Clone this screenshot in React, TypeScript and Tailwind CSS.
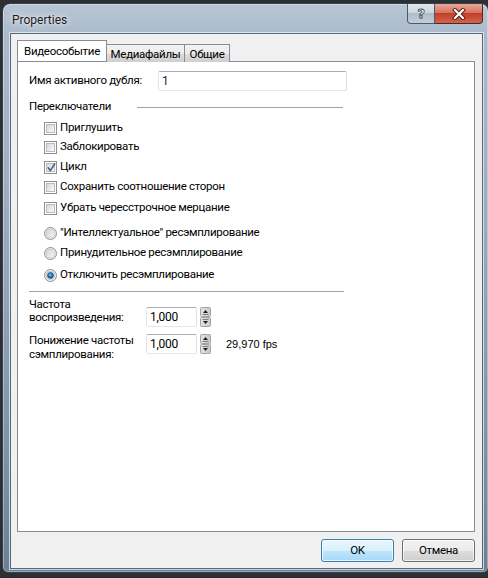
import React from 'react';

function CheckBox({ checked }: { checked?: boolean }) {
  return (
    <div className="relative w-[13px] h-[13px] border border-[#8e8f8f] bg-white p-[1px] shrink-0">
      <div className="w-full h-full border border-[#b9bdc2] bg-[linear-gradient(135deg,#d5d8dc_0%,#e9ebed_55%,#f9f9f9_100%)]" />
      {checked && (
        <svg className="absolute left-[1px] top-[0px]" width="11" height="11" viewBox="0 0 11 11">
          <path d="M2.2 5.8 L4.3 8.6 L8.8 1.8" fill="none" stroke="#4a5f8c" strokeWidth="1.6" strokeLinecap="round" strokeLinejoin="round" />
        </svg>
      )}
    </div>
  );
}

function Radio({ checked }: { checked?: boolean }) {
  return (
    <svg width="13" height="13" viewBox="0 0 13 13" className="shrink-0">
      <defs>
        <linearGradient id="rbg" x1="0" y1="0" x2="1" y2="1">
          <stop offset="0" stopColor="#cfd3d8" />
          <stop offset="1" stopColor="#f7f7f7" />
        </linearGradient>
        <radialGradient id="rdot" cx="0.45" cy="0.4" r="0.6">
          <stop offset="0" stopColor="#8fd0f4" />
          <stop offset="0.45" stopColor="#2a7fc6" />
          <stop offset="1" stopColor="#1a4f8a" />
        </radialGradient>
      </defs>
      <circle cx="6.5" cy="6.5" r="6" fill="#fff" stroke="#8e8f8f" />
      <circle cx="6.5" cy="6.5" r="4.6" fill="url(#rbg)" stroke="#b3b7bc" strokeWidth="0.8" />
      {checked && <circle cx="6.5" cy="6.5" r="3" fill="url(#rdot)" stroke="#174b80" strokeWidth="0.6" />}
    </svg>
  );
}

function Spinner() {
  return (
    <svg width="11" height="20" viewBox="0 0 11 20" className="shrink-0">
      <defs>
        <linearGradient id="sp" x1="0" y1="0" x2="1" y2="0">
          <stop offset="0" stopColor="#e4e4e4" />
          <stop offset="1" stopColor="#c9c9c9" />
        </linearGradient>
      </defs>
      <rect x="0.5" y="0.5" width="10" height="9" rx="1" fill="url(#sp)" stroke="#a3a3a3" />
      <rect x="0.5" y="10.5" width="10" height="9" rx="1" fill="url(#sp)" stroke="#a3a3a3" />
      <path d="M3 6 L5.5 3 L8 6 Z" fill="#1e1e1e" />
      <path d="M3 14 L8 14 L5.5 17 Z" fill="#1e1e1e" />
      <line x1="2.5" y1="7.5" x2="8.5" y2="7.5" stroke="#7c7c7c" />
      <line x1="2.5" y1="12.5" x2="8.5" y2="12.5" stroke="#7c7c7c" />
    </svg>
  );
}

function SpinField({ value }: { value: string }) {
  return (
    <div className="flex items-start">
      <div className="w-[51px] h-[20px] border border-[#abadb3] border-l-[#e2e3ea] border-r-[#dbdfe6] border-b-[#e3e9ef] rounded-[2px] bg-white pl-[3px] leading-[18px] text-[12px]">
        {value}
      </div>
      <div className="ml-[3px]">
        <Spinner />
      </div>
    </div>
  );
}

function Row({ children, className }: { children: React.ReactNode; className: string }) {
  return <div className={`flex items-center h-[16px] pl-[15px] gap-[3px] ${className}`}>{children}</div>;
}

export default function App() {
  return (
    <div className="w-[488px] h-[578px] overflow-hidden bg-[#2d3033] pt-[3px] pl-[2px] font-['Segoe_UI',Roboto,sans-serif] text-[11.5px] tracking-[-0.3px] text-black">
      <div className="w-[487px] h-[570px] flex flex-col rounded-t-[8px] rounded-b-[6px] border border-[#34404d] bg-[linear-gradient(180deg,#b7c5d3_0%,#aabacb_6%,#95a8bb_45%,#7a8ea3_85%,#6a7e94_100%)] shadow-[inset_0_0_0_1px_rgba(255,255,255,0.35)]">
        {/* title bar */}
        <div className="h-[29px] flex justify-between">
          <div className="pl-[9px] pt-[7px] text-[12px] tracking-normal text-[#1b1b1b] [text-shadow:0_0_8px_rgba(255,255,255,0.95),0_0_3px_rgba(255,255,255,0.8)]">
            Properties
          </div>
          <div className="flex mr-[5px] h-[20px]">
            <div className="w-[28px] h-[20px] rounded-bl-[4px] border border-t-0 border-[#4b5a6a] bg-[linear-gradient(180deg,#e2e8ee_0%,#cdd6e0_45%,#aebbc9_50%,#c3ced9_100%)] flex items-center justify-center">
              <span className="font-['DejaVu_Sans',sans-serif] font-bold text-[13px] leading-none text-white [-webkit-text-stroke:0.8px_#3a4654]">?</span>
            </div>
            <div className="w-[48px] h-[20px] rounded-br-[4px] border border-l-0 border-t-0 border-[#4b2a25] bg-[linear-gradient(180deg,#e8a899_0%,#d7735f_45%,#c23f27_50%,#d2644c_100%)] flex items-center justify-center">
              <svg width="14" height="12" viewBox="0 0 14 12">
                <path d="M3 2 L11 10 M11 2 L3 10" stroke="#4a1d16" strokeWidth="4" strokeLinecap="square" />
                <path d="M3 2 L11 10 M11 2 L3 10" stroke="#ffffff" strokeWidth="2.2" strokeLinecap="square" />
              </svg>
            </div>
          </div>
        </div>

        {/* client area */}
        <div className="ml-[7px] w-[473px] h-[536px] border border-[#56677a] bg-[#f0f0f0] shadow-[0_0_0_1px_rgba(235,241,247,0.75)] flex flex-col pt-[7px] pl-[6px] pr-[7px]">
          {/* tabs */}
          <div className="flex items-end h-[20px] relative z-10">
            <div className="w-[90px] h-[21px] border border-b-0 border-[#898c95] bg-white text-center leading-[20px]">Видеособытие</div>
            <div className="w-[78px] h-[18px] border border-l-0 border-b-0 border-[#898c95] bg-[linear-gradient(180deg,#f3f3f3_0%,#ebebeb_50%,#dddddd_51%,#cfcfcf_100%)] text-center leading-[18px] mb-[-1px]">Медиафайлы</div>
            <div className="w-[45px] h-[18px] border border-l-0 border-b-0 border-[#898c95] bg-[linear-gradient(180deg,#f3f3f3_0%,#ebebeb_50%,#dddddd_51%,#cfcfcf_100%)] text-center leading-[18px] mb-[-1px]">Общие</div>
          </div>

          {/* tab page */}
          <div className="h-[471px] border border-[#898c95] bg-white flex flex-col pl-[11px] pt-[9px]">
            <div className="flex items-center h-[20px]">
              <div className="w-[129px]">Имя активного дубля:</div>
              <div className="w-[189px] h-[20px] border border-[#abadb3] border-l-[#e2e3ea] border-r-[#dbdfe6] border-b-[#e3e9ef] rounded-[2px] pl-[3px] leading-[18px] text-[12px] text-[#2a0f55]">1</div>
            </div>

            <div className="flex items-center h-[14px] mt-[9px]">
              <div className="w-[108px]">Переключатели</div>
              <div className="w-[206px] h-px bg-[#a0a0a0]" />
            </div>

            <Row className="mt-[6px]"><CheckBox /><span>Приглушить</span></Row>
            <Row className="mt-[3px]"><CheckBox /><span>Заблокировать</span></Row>
            <Row className="mt-[4px]"><CheckBox checked /><span>Цикл</span></Row>
            <Row className="mt-[4px]"><CheckBox /><span>Сохранить соотношение сторон</span></Row>
            <Row className="mt-[5px]"><CheckBox /><span>Убрать чересстрочное мерцание</span></Row>

            <Row className="mt-[9px]"><Radio /><span>"Интеллектуальное" ресэмплирование</span></Row>
            <Row className="mt-[4px]"><Radio /><span>Принудительное ресэмплирование</span></Row>
            <Row className="mt-[6px]"><Radio checked /><span>Отключить ресэмплирование</span></Row>

            <div className="mt-[8px] w-[315px] h-px bg-[#a0a0a0]" />

            <div className="flex items-start mt-[6px]">
              <div className="w-[117px] leading-[13px]">
                <div>Частота</div>
                <div>воспроизведения:</div>
              </div>
              <div className="mt-[9px]">
                <SpinField value="1,000" />
              </div>
            </div>

            <div className="flex items-start mt-[7px]">
              <div className="w-[117px] leading-[13.5px]">
                <div>Понижение частоты</div>
                <div>сэмплирования:</div>
              </div>
              <SpinField value="1,000" />
              <div className="ml-[15px] h-[20px] leading-[20px] font-['Liberation_Sans',Arial,sans-serif] text-[11px] tracking-normal">29,970 fps</div>
            </div>
          </div>

          {/* dialog buttons */}
          <div className="flex justify-end gap-[8px] mt-[7px]">
            <button className="w-[73px] h-[23px] rounded-[3px] border border-[#3c7fb1] bg-[linear-gradient(180deg,#eaf6fd_0%,#d9f0fc_50%,#bee6fd_51%,#a7d9f5_100%)] shadow-[inset_0_0_0_1px_rgba(255,255,255,0.7)]">
              OK
            </button>
            <button className="w-[73px] h-[23px] rounded-[3px] border border-[#707070] bg-[linear-gradient(180deg,#f2f2f2_0%,#ebebeb_50%,#dddddd_51%,#cfcfcf_100%)] shadow-[inset_0_0_0_1px_rgba(255,255,255,0.7)]">
              Отмена
            </button>
          </div>
        </div>
      </div>
    </div>
  );
}
